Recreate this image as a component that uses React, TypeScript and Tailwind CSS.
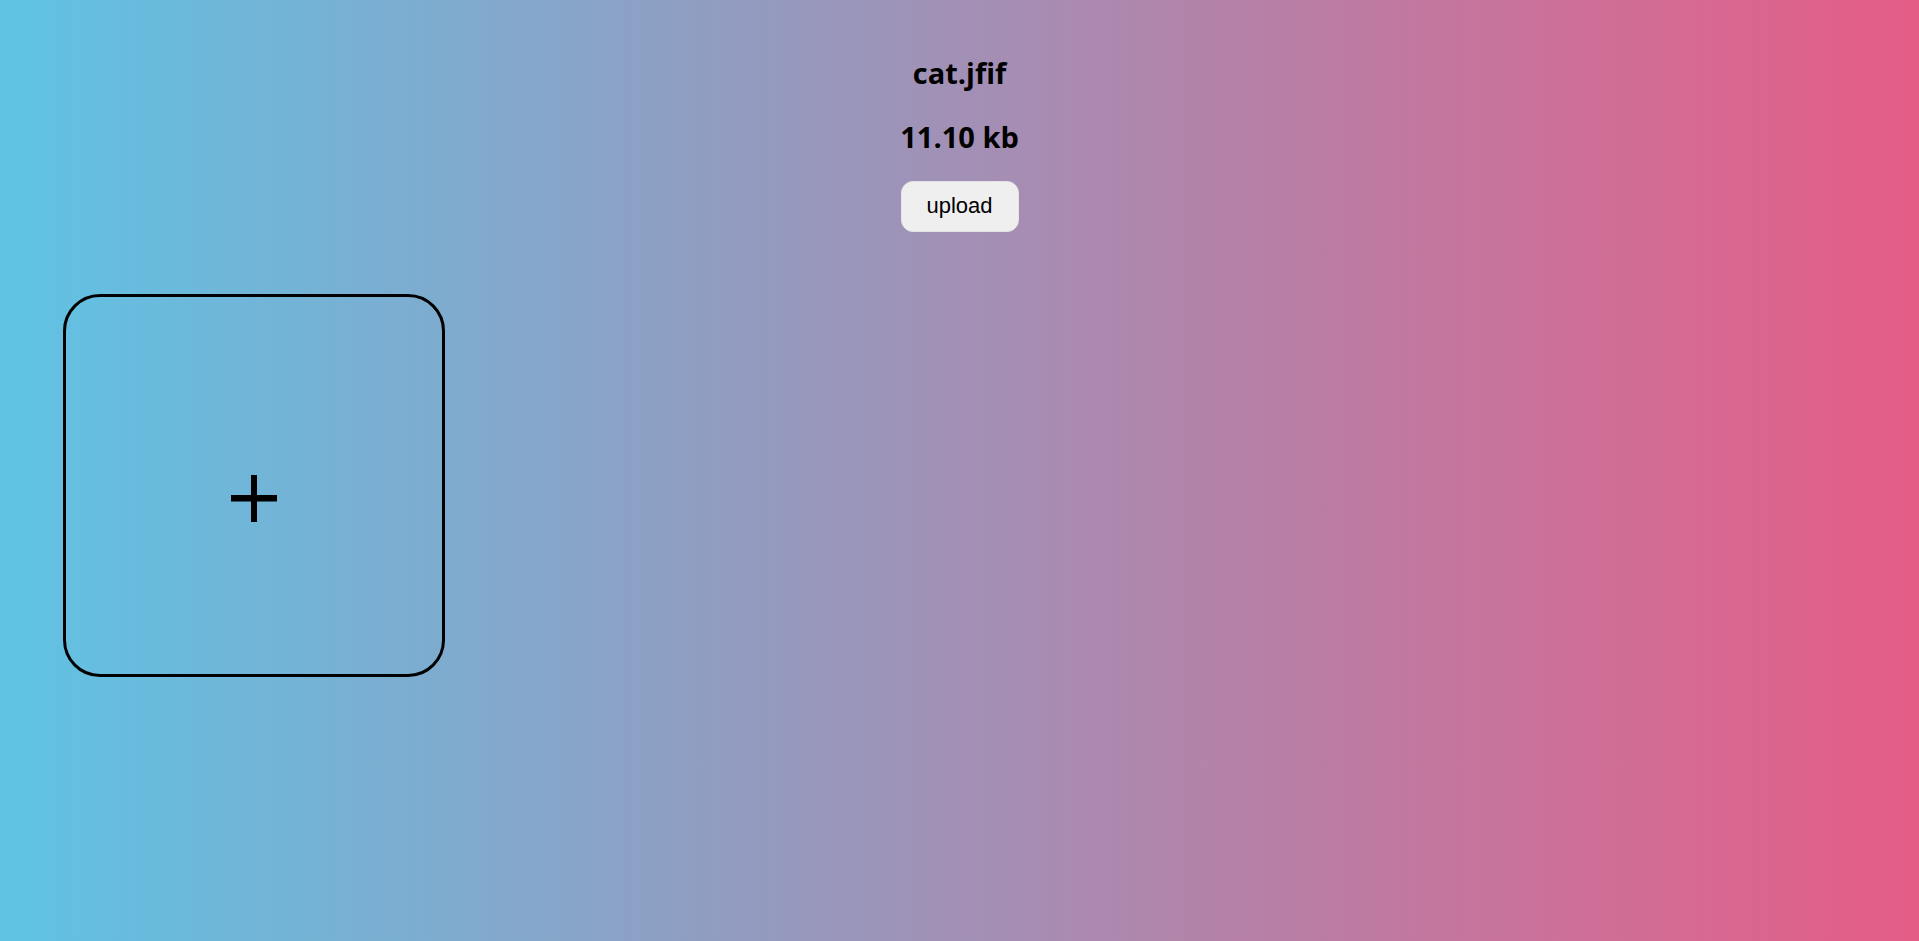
export default function App() {
  return (
    <div className="min-h-[941px] w-full bg-[linear-gradient(to_right,#5fc3e4,#e55d87)] pt-[53px] font-['Open_Sans',sans-serif] text-black">
      <div className="flex flex-col items-center">
        <h2 className="text-[29px] font-bold leading-[40px]">cat.jfif</h2>
        <h2 className="mt-[24px] text-[29px] font-bold leading-[40px]">11.10 kb</h2>
        <button className="mt-[24px] h-[51px] w-[118px] rounded-[12px] border border-[#e4e4e4] bg-[#efefef] pb-[2px] font-['Liberation_Sans',Arial,sans-serif] text-[22px] leading-none">
          upload
        </button>
      </div>

      <div className="mt-[62px] pl-[63px]">
        <div className="flex h-[383px] w-[382px] items-center justify-center rounded-[37px] border-[3px] border-black pt-[25px]">
          <svg width="46" height="47" viewBox="0 0 46 47" aria-label="add">
            <rect x="0" y="20" width="46" height="6.5" fill="#000" />
            <rect x="20" y="0" width="6" height="47" fill="#000" />
          </svg>
        </div>
      </div>
    </div>
  );
}
